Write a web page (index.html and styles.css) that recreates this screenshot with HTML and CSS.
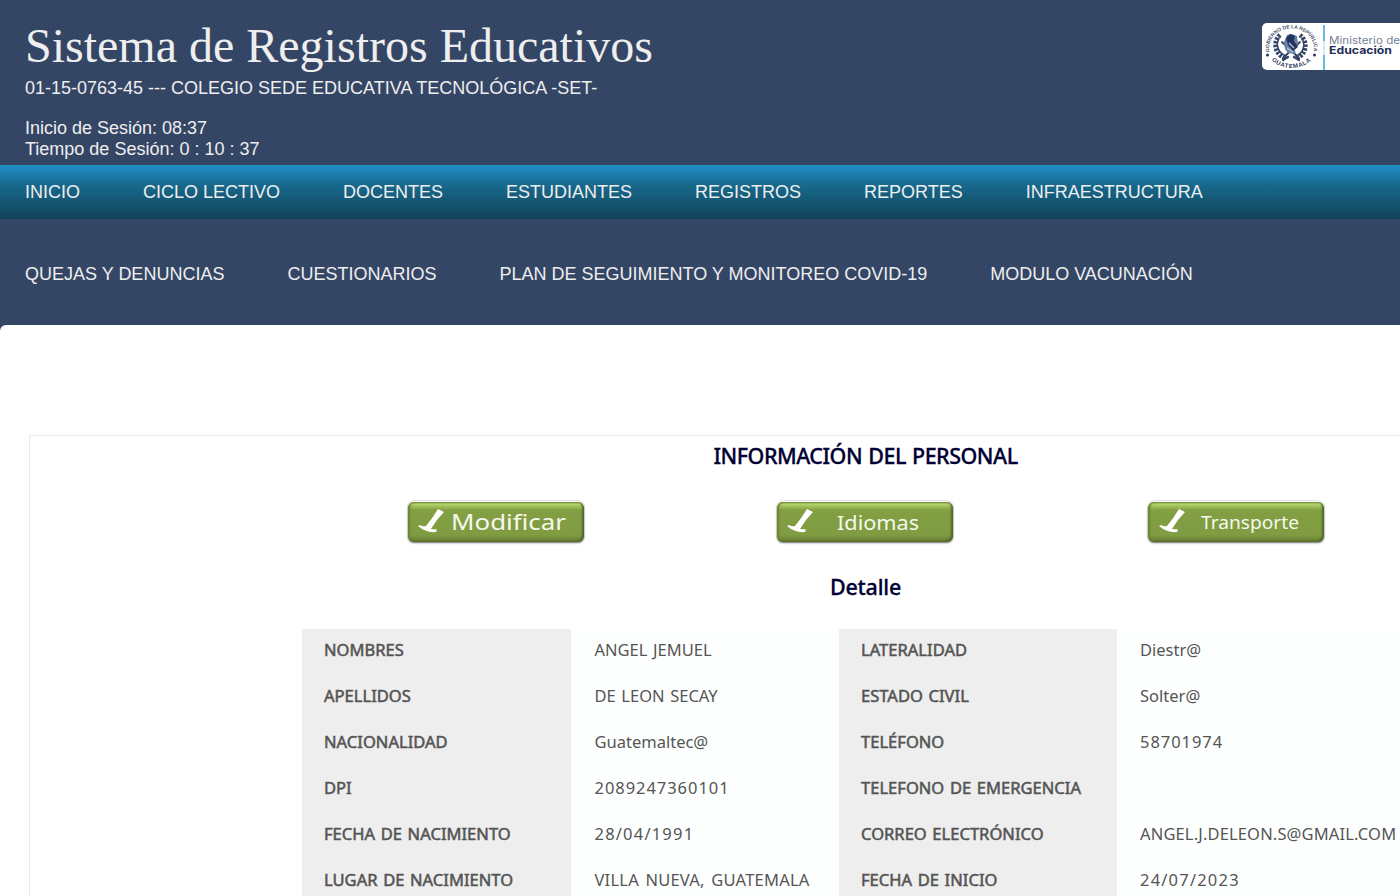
FILE: index.html
```html
<!DOCTYPE html>
<html lang="es">
<head>
<meta charset="utf-8">
<title>Sistema de Registros Educativos</title>
<link rel="stylesheet" href="styles.css">
</head>
<body>
<header class="header">
  <div class="heading">
    <h1 class="title">Sistema de Registros Educativos</h1>
    <p class="school">01-15-0763-45 --- COLEGIO SEDE EDUCATIVA TECNOLÓGICA -SET-</p>
    <p class="session">Inicio de Sesión: 08:37<br>Tiempo de Sesión: 0 : 10 : 37</p>
  </div>
  <svg class="logo" width="138" height="47" viewBox="0 0 138 47" role="img" aria-label="Ministerio de Educación">
    <rect width="150" height="47" rx="5" fill="#fff"/>
    <path id="ring-top" d="M7.5 29A22.5 19.5 0 1 1 51.5 29" fill="none"/>
    <path id="ring-bottom" d="M7 34A26 22 0 0 0 52 34" fill="none"/>
    <text class="ring-text"><textPath href="#ring-top" startOffset="0" textLength="73">GOBIERNO DE LA REPÚBLICA</textPath></text>
    <text class="ring-text ring-bold"><textPath href="#ring-bottom" startOffset="4" textLength="43">GUATEMALA</textPath></text>
    <circle cx="5.5" cy="32" r="1.5" fill="#26355e"/><circle cx="52.5" cy="32" r="1.5" fill="#26355e"/>
    <g fill="none" stroke="#344367" stroke-linecap="round">
      <path d="M18 12C11 18 12 31 23 35M38 12C46 18 45 31 35 35" stroke-width="4.6" stroke-dasharray="2.4 1.3" stroke-linecap="butt"/>
      <path d="M17 15C13 23 17 30 24 33M40 15C44 23 41 30 34 33" stroke-width="1.5"/>
      <path d="M21 35L38 19M37 35L20 19" stroke-width="1.8"/>
      <path d="M21 37L26 34M37 37L32 34" stroke-width="2.4"/>
    </g>
    <path d="M22 19L25 12L30 11L35 13L36 20L32 25L34 31L26 30L23 26Z" fill="#6684a8"/>
    <path d="M24 15L28 11L33 13L32 18L36 24L31 28L26 22Z" fill="#243660"/>
    <path d="M27 20L32 25M25 25L31 29" stroke="#bdc9db" stroke-width="1.2"/>
    <path d="M62 2V18M62 32V47" stroke="#68bddc" stroke-width="2"/>
    <path d="M62 18V32" stroke="#d2e9f4" stroke-width="2"/>
    <text x="67" y="21" class="logo-light" textLength="71" lengthAdjust="spacingAndGlyphs">Ministerio de</text>
    <text x="67" y="31" class="logo-bold" textLength="63" lengthAdjust="spacingAndGlyphs">Educación</text>
  </svg>
</header>
<nav>
  <div class="nav nav-main"><a>INICIO</a><a>CICLO LECTIVO</a><a>DOCENTES</a><a>ESTUDIANTES</a><a>REGISTROS</a><a>REPORTES</a><a>INFRAESTRUCTURA</a></div>
  <div class="nav nav-more"><a>QUEJAS Y DENUNCIAS</a><a>CUESTIONARIOS</a><a>PLAN DE SEGUIMIENTO Y MONITOREO COVID-19</a><a>MODULO VACUNACIÓN</a></div>
</nav>
<main class="page">
  <section class="panel">
    <h2 class="section-title">INFORMACIÓN DEL PERSONAL</h2>
    <div class="actions">
      <button class="action"><svg width="176" height="40" viewBox="0 0 176 40"><use href="#pen"/><text x="43" y="27.5" font-size="22" textLength="115" lengthAdjust="spacingAndGlyphs">Modificar</text></svg></button>
      <button class="action"><svg width="176" height="40" viewBox="0 0 176 40"><use href="#pen"/><text x="60" y="27.5" font-size="20.5" textLength="82" lengthAdjust="spacingAndGlyphs">Idiomas</text></svg></button>
      <button class="action"><svg width="176" height="40" viewBox="0 0 176 40"><use href="#pen" x="1"/><text x="53" y="27" font-size="17.5" textLength="98" lengthAdjust="spacingAndGlyphs">Transporte</text></svg></button>
    </div>
    <h2 class="section-title detail-title">Detalle</h2>
    <dl class="details">
      <dt>NOMBRES</dt><dd>ANGEL JEMUEL</dd><dt>LATERALIDAD</dt><dd>Diestr@</dd>
      <dt>APELLIDOS</dt><dd>DE LEON SECAY</dd><dt>ESTADO CIVIL</dt><dd>Solter@</dd>
      <dt>NACIONALIDAD</dt><dd>Guatemaltec@</dd><dt>TELÉFONO</dt><dd class="number">58701974</dd>
      <dt>DPI</dt><dd class="number">2089247360101</dd><dt>TELEFONO DE EMERGENCIA</dt><dd></dd>
      <dt>FECHA DE NACIMIENTO</dt><dd class="date">28/04/1991</dd><dt>CORREO ELECTRÓNICO</dt><dd class="email">ANGEL.J.DELEON.S@GMAIL.COM</dd>
      <dt>LUGAR DE NACIMIENTO</dt><dd class="place">VILLA NUEVA, GUATEMALA</dd><dt>FECHA DE INICIO</dt><dd class="date">24/07/2023</dd>
    </dl>
  </section>
</main>
<svg width="0" height="0" class="symbols"><defs><g id="pen"><path d="M30 7L36 10Q28 18 23 27L29 27.5L28 30Q18 31 10 24L12 23Q15 25 18 24Q24 17 30 7Z" fill="#fff"/></g></defs></svg>
</body>
</html>
```
FILE: styles.css
```css
* { box-sizing: border-box; }
body {
  margin: 0;
  height: 896px;
  overflow: hidden;
  font: 18px/21px "Liberation Sans", Arial, sans-serif;
  color: #eee;
  background:
    conic-gradient(#ffffff06 25%, transparent 0 50%, #ffffff06 0 75%, transparent 0) 0 0 / 4px 4px,
    #324463;
}
.header { height: 165px; display: flex; justify-content: space-between; padding: 19px 0 0 25px; overflow: hidden; }
.heading { white-space: nowrap; }
.title { margin: 0; font: 48px/54px "Liberation Serif", "Times New Roman", serif; }
.school { margin: 5px 0 19px; }
.session { margin: 0; }
.logo { flex: none; margin: 4px 0 0; }
.ring-text { font: bold 5px "Liberation Sans", sans-serif; fill: #4a5470; }
.ring-bold { font-size: 6px; fill: #2c385c; }
.logo-light { font: 10px Inter, sans-serif; fill: #777f90; }
.logo-bold { font: bold 10.5px Inter, sans-serif; fill: #1e3056; }
.nav { display: flex; gap: 63px; padding-left: 25px; white-space: nowrap; }
.nav-main { height: 54px; padding-top: 17px; background: linear-gradient(#1f8fc8, #186a8e 35%, #104359); }
.nav-more { height: 106px; padding-top: 45px; }
.page { height: 571px; padding: 110px 0 0 29px; background: #fff; border-top-left-radius: 6px; overflow: hidden; }
.panel { width: 1673px; height: 461px; border: 1px solid #e9e9e9; border-bottom: 0; padding-top: 5px; }
.section-title {
  margin: 0;
  font: 500 21.5px/30px "Noto Sans", sans-serif;
  color: #000033;
  text-align: center;
  letter-spacing: -0.5px;
  word-spacing: 1px;
  -webkit-text-stroke: 0.3px;
}
.actions { display: grid; grid-template-columns: 369px 371px 178px; margin: 29px 0 0 377px; }
.action {
  width: 178px; height: 43px; padding: 0;
  border: 1px solid #e5e5e5; border-radius: 7px;
  background: #fff;
}
.action svg {
  display: block; border-radius: 6px;
  background: linear-gradient(#6f8f35, #b5d66d 5%, #9dbc59 12%, #839f43 20%, #809c42 82%, #647c32);
  box-shadow: inset -2px -1px 2px #526728, inset 2px 0 2px #6c8436, 0 1px 2px #777;
}
.action text { font-family: "Noto Sans", sans-serif; fill: #f5f8ec; }
.section-title.detail-title { margin-top: 29px; letter-spacing: -0.2px; }
.details {
  display: grid; grid-template-columns: 269px 268px 278px 283px; grid-auto-rows: 46px;
  margin: 27px 0 0 272px;
  font: 16.5px/22px "Noto Sans", sans-serif; color: #555;
  width: 1098px;
}
.details dt, .details dd { margin: 0; padding: 10px 0 0 22px; white-space: nowrap; word-spacing: 1.3px; }
.details dt { background: #eee; letter-spacing: .03px; -webkit-text-stroke: 0.55px #555; }
.details dd { padding-left: 23.5px; background: #fdfffe; }
.details dd:nth-child(4n) { padding-left: 23px; }
.details .number { letter-spacing: .95px; }
.details .date { letter-spacing: 1.2px; }
.details .email { letter-spacing: .15px; }
.details .place { letter-spacing: .22px; word-spacing: 2px; }
.symbols { display: block; }
```
